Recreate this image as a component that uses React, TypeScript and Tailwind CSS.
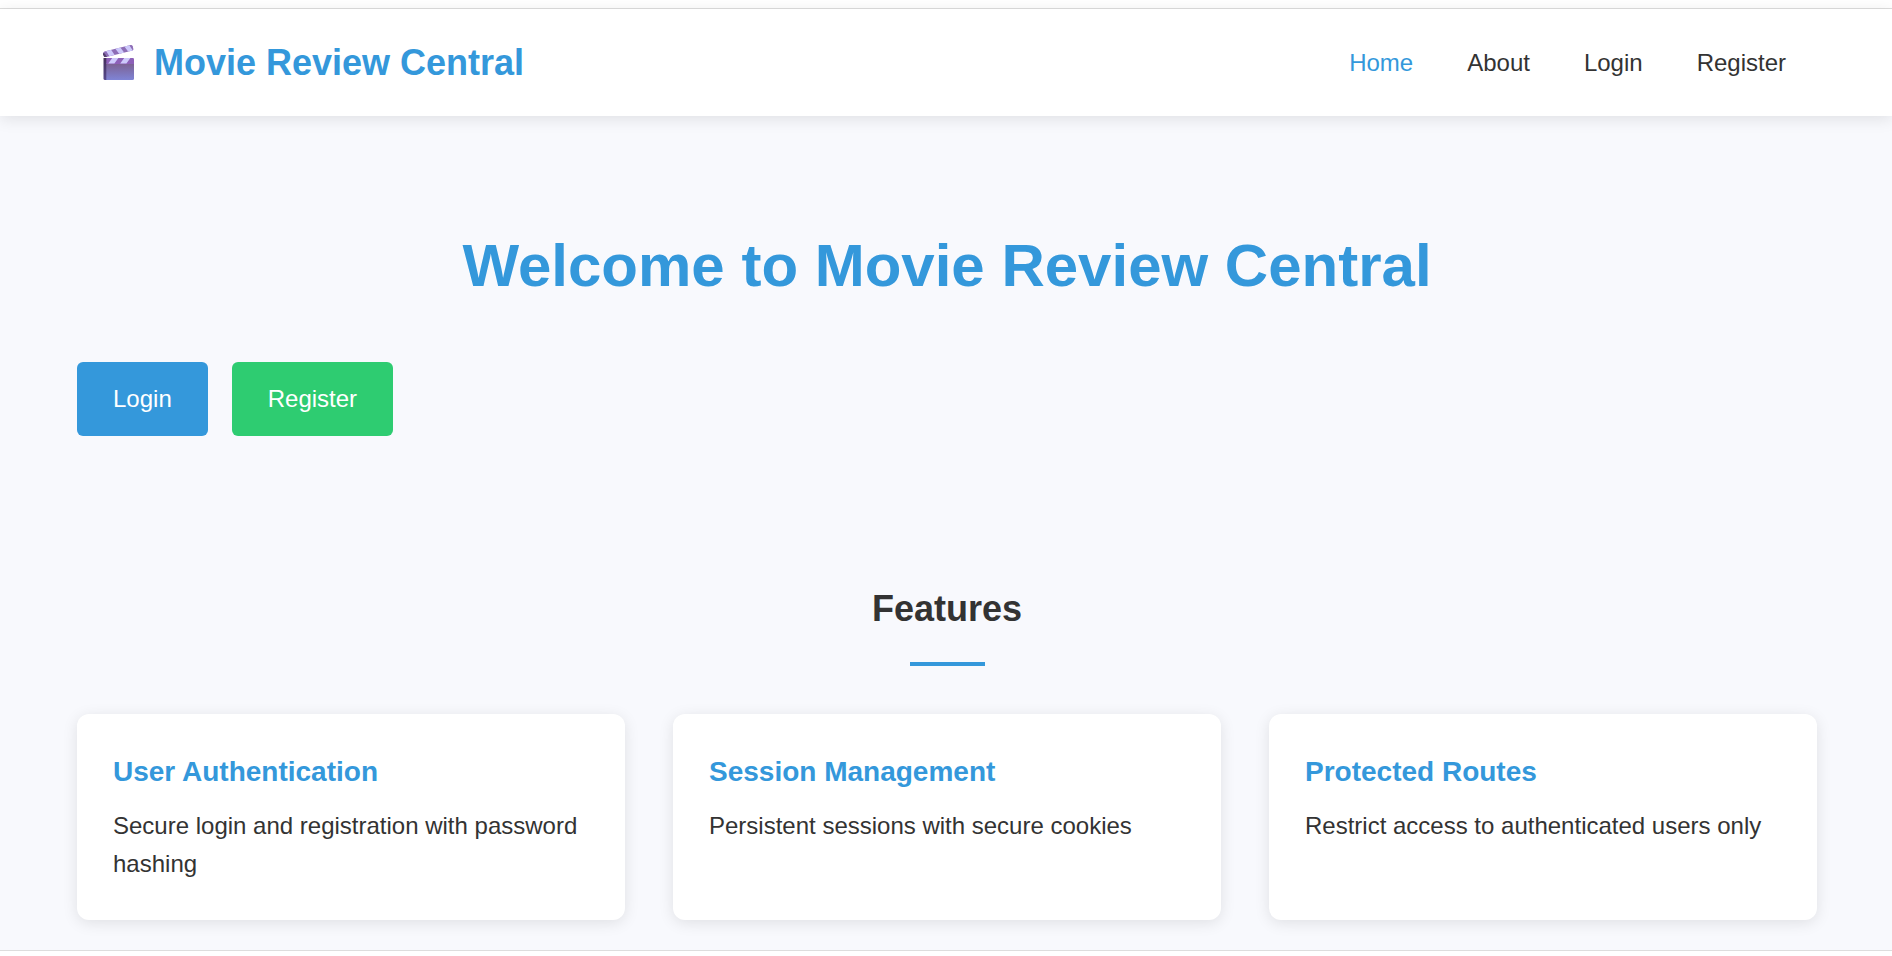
const navLinks = ["Home", "About", "Login", "Register"];

const features = [
  { title: "User Authentication", text: "Secure login and registration with password hashing" },
  { title: "Session Management", text: "Persistent sessions with secure cookies" },
  { title: "Protected Routes", text: "Restrict access to authenticated users only" },
];

function ClapperIcon() {
  return (
    <svg viewBox="0 0 31 35" className="h-[35px] w-[31px]" aria-hidden="true">
      <defs>
        <linearGradient id="slate" x1="0" y1="0" x2="0" y2="1">
          <stop offset="0" stopColor="#7c6090" />
          <stop offset="1" stopColor="#7f84d6" />
        </linearGradient>
        <linearGradient id="spine" x1="0" y1="0" x2="0" y2="1">
          <stop offset="0" stopColor="#45305a" />
          <stop offset="1" stopColor="#574a8c" />
        </linearGradient>
        <clipPath id="arm">
          <path d="M1.4 6.6 L27.6 0.1 Q29.2 -0.2 29.7 1.3 L30.4 4 Q30.5 5.2 29.6 5.5 L3.5 12 L1.2 12 L0 9.3 Q-0.2 7.1 1.4 6.6Z" />
        </clipPath>
        <clipPath id="band">
          <path d="M3.3 13 H29.8 Q31 13 31 14.2 V19 H3.3Z" />
        </clipPath>
      </defs>
      <g clipPath="url(#arm)">
        <rect width="31" height="13" fill="#8d6db6" />
        <path d="M2.8 5.5 L7.8 4.3 L12 10.5 L6.8 12Z M12 3.2 L17 2 L21.5 8 L16.5 9.3Z M21 1 L26 -0.2 L30 5.8 L25.5 7Z" fill="#cdc9fb" />
        <path d="M0 8 L1.8 8.4 L4 12 L0 12Z" fill="#54406c" />
      </g>
      <path d="M0.5 13 H4 V35 H2.1 Q0.5 35 0.5 33.4Z" fill="url(#spine)" />
      <path d="M3.3 18 H31 V33.5 Q31 35 29.5 35 H3.3Z" fill="url(#slate)" />
      <g clipPath="url(#band)">
        <rect x="3" y="13" width="28" height="6" fill="#8d60b8" />
        <path d="M9.2 13 H15.4 L11.4 18.4 H5.2Z M21.2 13 H27.4 L23.4 18.4 H17.2Z" fill="#cdc9fb" />
      </g>
    </svg>
  );
}

export default function App() {
  return (
    <div className="bg-white pt-2 pb-[5px] font-['Liberation_Sans',Arial,sans-serif] text-[24px] leading-[38px] text-[#333333]">
      <div className="border-y border-[#dddddd] bg-[#f8f9fd] pb-[30px]">
        <header className="bg-white shadow-[0_3px_15px_rgba(0,0,0,0.1)]">
          <div className="mx-auto flex max-w-[1800px] items-center justify-between py-6 pr-[60px] pl-[57px]">
            <a href="#home" className="flex items-center gap-5 text-[36px] leading-[59px] font-bold text-[#3498db]">
              <ClapperIcon />
              Movie Review Central
            </a>
            <nav className="flex gap-[54px]">
              {navLinks.map((label) => (
                <a key={label} href={`#${label.toLowerCase()}`} className={label === "Home" ? "text-[#3498db]" : ""}>
                  {label}
                </a>
              ))}
            </nav>
          </div>
        </header>

        <main className="mx-auto max-w-[1800px] pr-[29px] pl-[31px]">
          <section className="pt-[102px]">
            <h1 className="mb-12 text-center text-[60px] leading-[96px] font-bold text-[#3498db]">
              Welcome to Movie Review Central
            </h1>
            <div className="flex gap-6 text-white">
              <button type="button" className="rounded-md bg-[#3498db] px-9 py-[18px]">Login</button>
              <button type="button" className="rounded-md bg-[#2ecc71] px-9 py-[18px]">Register</button>
            </div>
          </section>

          <section className="pt-36">
            <h2 className="text-center text-[36px] leading-[58px] font-bold">Features</h2>
            <div className="mx-auto mt-6 mb-12 h-1 w-[75px] bg-[#3498db]" />
            <div className="grid grid-cols-3 gap-12">
              {features.map((f) => (
                <article key={f.title} className="rounded-xl bg-white px-9 pt-9 pb-[37px] shadow-[0_3px_15px_rgba(0,0,0,0.1)]">
                  <h3 className="mb-[13px] text-[28px] leading-[44px] font-bold text-[#3498db]">{f.title}</h3>
                  <p>{f.text}</p>
                </article>
              ))}
            </div>
          </section>
        </main>
      </div>
    </div>
  );
}
